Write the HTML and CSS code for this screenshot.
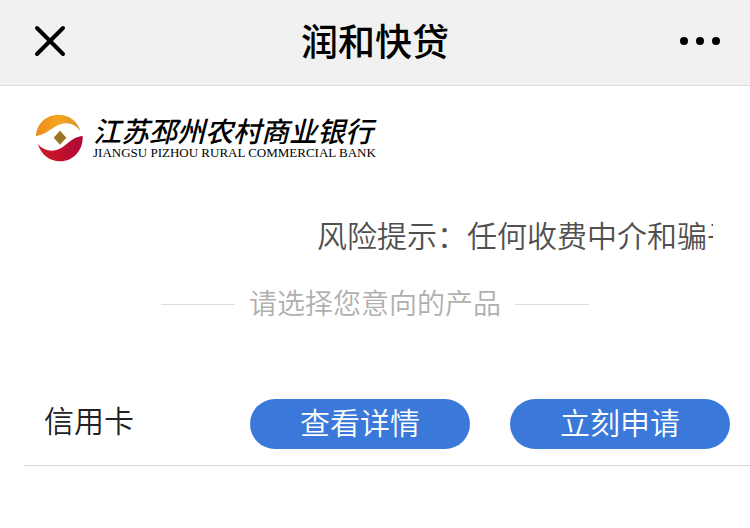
FILE: index.html
```html
<!DOCTYPE html>
<html lang="zh-CN">
<head>
    <meta charset="UTF-8">
    <meta name="viewport" content="width=device-width, initial-scale=1">
    <title>润和快贷</title>
    <link rel="stylesheet" href="styles.css">
</head>
<body>
    <header class="navbar">
        <button class="nav-btn" type="button" aria-label="关闭">
            <svg width="32" height="32" viewBox="0 0 32 32" fill="none" stroke="#000" stroke-width="4" stroke-linecap="round">
                <path d="M3 3L29 29M29 3L3 29"/>
            </svg>
        </button>
        <h1 class="nav-title">润和快贷</h1>
        <button class="nav-btn" type="button" aria-label="更多">
            <svg width="40" height="8" viewBox="0 0 40 8" fill="#000">
                <circle cx="4" cy="4" r="4"/>
                <circle cx="20" cy="4" r="4"/>
                <circle cx="36" cy="4" r="4"/>
            </svg>
        </button>
    </header>

    <main>
        <div class="bank">
            <svg class="bank-logo" width="48" height="48" viewBox="18 18 144 144">
                <defs>
                    <linearGradient id="gold" x1="0" y1="0" x2="1" y2="0">
                        <stop offset="0" stop-color="#ee8a1c"/>
                        <stop offset="0.5" stop-color="#f6a51f"/>
                        <stop offset="1" stop-color="#d9912e"/>
                    </linearGradient>
                    <linearGradient id="red" x1="0" y1="0" x2="1" y2="0">
                        <stop offset="0" stop-color="#d01c25"/>
                        <stop offset="1" stop-color="#b00836"/>
                    </linearGradient>
                </defs>
                <path fill="url(#gold)" d="M18 84C20 46 49 20 86 20C117 20 142 39 152 70C137 50 118 42 97 47C66 54 54 78 18 84Z"/>
                <path fill="url(#red)" d="M158 84C160 127 130 160 90 160C59 160 34 140 23 108C38 124 56 131 76 127C109 120 118 88 158 84Z"/>
                <path fill="#9a7423" d="M90 68L109 89L90 110L71 89Z"/>
            </svg>
            <div class="bank-name">
                <span class="bank-cn">江苏邳州农村商业银行</span>
                <span class="bank-en">JIANGSU PIZHOU RURAL COMMERCIAL BANK</span>
            </div>
        </div>

        <div class="notice">
            <p class="notice-text">风险提示：任何收费中介和骗子</p>
        </div>

        <h2 class="divider">请选择您意向的产品</h2>

        <ul class="products">
            <li class="product">
                <span class="product-name">信用卡</span>
                <button class="btn" type="button">查看详情</button>
                <button class="btn" type="button">立刻申请</button>
            </li>
        </ul>
    </main>
</body>
</html>
```
FILE: styles.css
```css
* {
    box-sizing: border-box;
}

body {
    margin: 0;
    background: #fff;
    color: #222;
    font-family: "Noto Sans CJK SC", sans-serif;
    font-size: 30px;
    font-weight: 350;
}

button {
    padding: 0;
    border: none;
    background: none;
    font: inherit;
    cursor: pointer;
}

/* top bar */
.navbar {
    display: flex;
    align-items: center;
    justify-content: space-between;
    height: 86px;
    padding: 0 30px 4px;
    background: #f1f1f1;
    border-bottom: 1px solid #dedede;
}

.nav-btn {
    display: flex;
    align-items: center;
    justify-content: center;
    width: 40px;
    height: 40px;
}

.nav-title {
    margin: 0;
    padding-bottom: 2px;
    color: #000;
    font-size: 37px;
    font-weight: 500;
    line-height: 48px;
}

/* bank logo */
.bank {
    display: flex;
    align-items: center;
    gap: 9px;
    padding: 28px 36px 0;
}

.bank-logo {
    flex: none;
}

.bank-name {
    display: flex;
    flex-direction: column;
    color: #000;
    white-space: nowrap;
}

.bank-cn {
    font-size: 28px;
    font-style: italic;
    font-weight: 500;
    line-height: 30px;
}

.bank-en {
    font-family: "Liberation Serif", serif;
    font-size: 13px;
    font-weight: 400;
    line-height: 16px;
}

/* scrolling notice */
.notice {
    margin: 50px 37px 0;
    overflow: hidden;
}

.notice-text {
    margin: 0;
    padding-left: 280px;
    color: #505050;
    line-height: 44px;
    white-space: nowrap;
}

.divider {
    display: flex;
    align-items: center;
    justify-content: center;
    gap: 14px;
    margin: 26px 0 0;
    color: #b0b0b0;
    font-size: 28px;
    font-weight: 350;
    line-height: 40px;
}

.divider::before,
.divider::after {
    content: "";
    width: 74px;
    height: 1px;
    margin-top: 4px;
    background: #ddd;
}

.products {
    margin: 57px 0 0 24px;
    padding: 0;
    list-style: none;
}

.product {
    display: flex;
    align-items: center;
    gap: 40px;
    padding: 20px 20px 16px;
    border-bottom: 1px solid #d8d8d8;
}

.product-name {
    flex: 1;
    padding-bottom: 10px;
    line-height: 40px;
}

.btn {
    width: 220px;
    height: 50px;
    padding-bottom: 6px;
    border-radius: 25px;
    background: #3a79da;
    color: #fff;
    line-height: 44px;
}
```
